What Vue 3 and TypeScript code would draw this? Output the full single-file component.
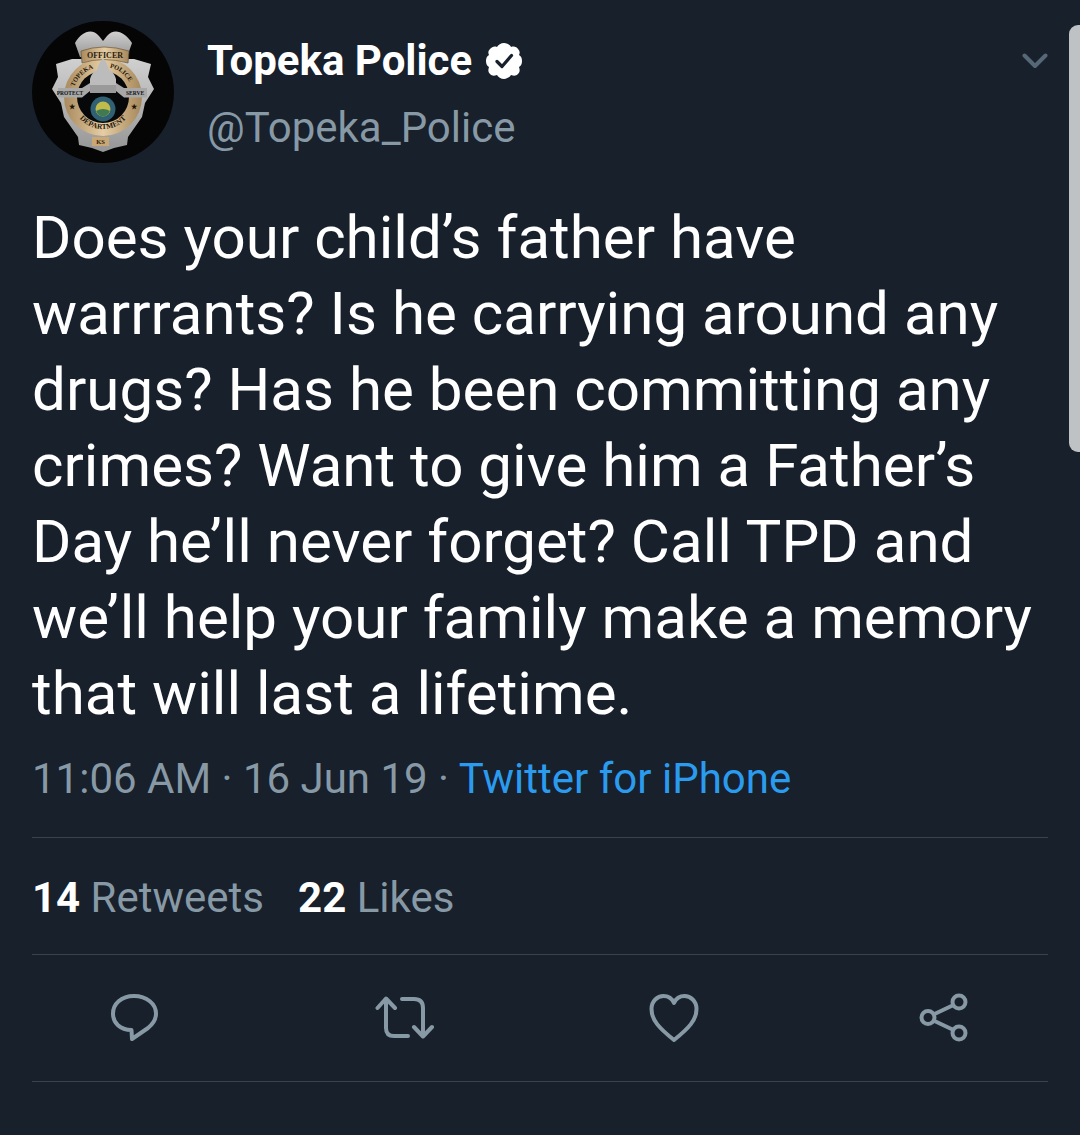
<script setup lang="ts">
const lines: string[] = [
  'Does your child’s father have',
  'warrrants? Is he carrying around any',
  'drugs? Has he been committing any',
  'crimes? Want to give him a Father’s',
  'Day he’ll never forget? Call TPD and',
  'we’ll help your family make a memory',
  'that will last a lifetime.',
]
</script>

<template>
  <main class="page">
    <div class="scrollbar"></div>
    <header class="head">
      <svg class="avatar" viewBox="0 0 142 142">
        <defs>
          <linearGradient id="gold" x1="0" y1="0" x2="1" y2="0">
            <stop offset="0" stop-color="#a88a5e" />
            <stop offset="0.5" stop-color="#e6cda3" />
            <stop offset="1" stop-color="#a5875a" />
          </linearGradient>
          <linearGradient id="silver" x1="0" y1="0" x2="0" y2="1">
            <stop offset="0" stop-color="#d0d0d0" />
            <stop offset="1" stop-color="#969696" />
          </linearGradient>
          <path id="arcL" d="M42 67 A30 30 0 0 1 67 46" />
          <path id="arcR" d="M75 46 A30 30 0 0 1 100 67" />
          <path id="arcB" d="M42 88 A31 31 0 0 0 100 88" />
        </defs>
        <circle cx="71" cy="71" r="71" fill="#050506" />
        <!-- eagle wings on top -->
        <path d="M43 22 C50 10 60 7 67 15 L71 20 L75 15 C82 7 92 10 100 22 L95 36 L48 36 Z" fill="url(#silver)" />
        <!-- shield body -->
        <path d="M24 43 L40 38 L102 38 L119 43 L116 56 L122 68 L113 82 L110 96 L96 116 L95 124 L82 127 L71 131 L60 127 L47 124 L46 116 L32 96 L29 82 L20 68 L26 56 Z" fill="url(#silver)" />
        <!-- ring -->
        <circle cx="71" cy="76" r="39" fill="url(#gold)" />
        <circle cx="71" cy="76" r="26" fill="#07080a" />
        <!-- officer banner -->
        <path d="M49 30 Q71 22 97 30 L96 42 Q71 35 50 42 Z" fill="url(#gold)" stroke="#6f5836" stroke-width="0.7" />
        <text class="b-t" font-size="8" x="73" y="37" text-anchor="middle" fill="#2a1b0c">OFFICER</text>
        <!-- ring texts -->
        <text class="b-t" font-size="6.5" fill="#1f1408">
          <textPath href="#arcL" startOffset="4%">TOPEKA</textPath>
        </text>
        <text class="b-t" font-size="6.5" fill="#1f1408">
          <textPath href="#arcR" startOffset="8%">POLICE</textPath>
        </text>
        <text class="b-t" font-size="7.5" fill="#1f1408">
          <textPath href="#arcB" startOffset="50%" text-anchor="middle">DEPARTMENT</textPath>
        </text>
        <!-- capitol dome -->
        <path d="M58 67 V58 Q60 51 65 49 Q67 41 71 37 Q75 41 77 49 Q82 51 84 58 V67 Z" fill="#bcbcbc" />
        <!-- side scrolls, running in to the dome -->
        <path d="M26 67 H50 L58 62 V70 L50 76.5 H26 Z" fill="#a8a8a8" />
        <path d="M115 67 H92 L84 62 V70 L92 76.5 H115 Z" fill="#a8a8a8" />
        <rect x="58" y="64" width="26" height="8" fill="#9a9a9a" />
        <text class="b-t" font-size="5.5" x="38" y="74" text-anchor="middle" fill="#111">PROTECT</text>
        <text class="b-t" font-size="5.5" x="103" y="74" text-anchor="middle" fill="#111">SERVE</text>
        <!-- seal -->
        <circle cx="71" cy="88" r="12.5" fill="#2f6073" />
        <circle cx="71" cy="88" r="7.5" fill="#c1bb4c" />
        <path d="M64 90 Q71 86 78 90 Q76 95 71 95.5 Q66 95 64 90 Z" fill="#3f7a52" />
        <!-- stars -->
        <text class="b-t" font-size="7" x="37" y="88" fill="#1f1408">★</text>
        <text class="b-t" font-size="7" x="99" y="88" fill="#1f1408">★</text>
        <!-- KS plaque -->
        <rect x="60" y="116" width="17" height="9" fill="#cba873" />
        <text class="b-t" font-size="6.5" x="68.5" y="123" text-anchor="middle" fill="#2a1b0c">KS</text>
      </svg>
      <div class="who">
        <div class="name-row">
          <span class="name">Topeka Police</span>
          <svg class="verified" viewBox="0 0 38 38">
            <path d="M19 1 C22 1 25 3 26 5 C29 4 32 5 33 7 C35 9 35 11 34 13 C36 14 37 16 37 19 C37 22 36 24 34 25 C35 28 35 30 33 32 C31 34 29 34 26 33 C25 35 22 37 19 37 C16 37 13 35 12 33 C9 34 7 34 5 32 C3 30 3 28 4 25 C2 24 1 22 1 19 C1 16 2 14 4 13 C3 11 3 9 5 7 C7 5 9 4 12 5 C13 3 16 1 19 1 Z" fill="#fff" />
            <path d="M12 19.5 L17 24.5 L26.5 13.5" fill="none" stroke="#17202b" stroke-width="3.2" stroke-linecap="round" stroke-linejoin="round" />
          </svg>
        </div>
        <div class="handle">@Topeka_Police</div>
      </div>
      <svg class="chev" viewBox="0 0 26 16">
        <path d="M2.5 2.5 L13 13 L23.5 2.5" fill="none" stroke="#566877" stroke-width="4" stroke-linecap="round" stroke-linejoin="round" />
      </svg>
    </header>

    <section class="body">
      <div v-for="l in lines" :key="l" class="line">{{ l }}</div>
    </section>

    <div class="meta">
      <span>11:06 AM · 16 Jun 19 · </span><span class="src">Twitter for iPhone</span>
    </div>

    <div class="stats">
      <span><b>14</b> Retweets</span>
      <span><b>22</b> Likes</span>
    </div>

    <nav class="actions">
      <svg class="act" viewBox="0 0 50 50">
        <path d="M24 3 C37 3 46 11 46 20.5 C46 27 43 31 38 35 L22 46 L21.5 37 C10 37 3 30 3 20.5 C3 11 11 3 24 3 Z" />
      </svg>
      <svg class="act act-rt" viewBox="0 0 60 50">
        <path d="M2.5 15 L11 5.5 L20 15 M11 6 V35 Q11 43 19 43 H33" />
        <path d="M27 6 H39 Q48 6 48 15 V43 M39 34 L48 43.5 L57 34" />
      </svg>
      <svg class="act act-heart" viewBox="0 0 50 50">
        <path d="M25 47 C10 35 2.5 27 2.5 16 C2.5 8 8.5 3 14.5 3 C19.5 3 23 5.5 25 10 C27 5.5 30.5 3 35.5 3 C41.5 3 47.5 8 47.5 16 C47.5 27 40 35 25 47 Z" />
      </svg>
      <svg class="act act-share" viewBox="0 0 50 50">
        <circle cx="9" cy="24.5" r="6.5" />
        <circle cx="40" cy="9" r="6.5" />
        <circle cx="40" cy="40" r="6.5" />
        <path d="M15.5 21 L33.5 12.5 M15.5 28 L33.5 36.5" />
      </svg>
    </nav>
  </main>
</template>

<style scoped>
.page {
  position: relative;
  box-sizing: border-box;
  width: 1080px;
  height: 1135px;
  overflow: hidden;
  padding: 21px 32px 0;
  background: #17202b;
  color: #fff;
  font-family: Roboto, "Liberation Sans", sans-serif;
}
.scrollbar {
  position: absolute;
  top: 25px;
  right: 0;
  width: 11px;
  height: 427px;
  border-radius: 9px 0 0 9px;
  background: #bfc2c5;
}
.head {
  display: flex;
  align-items: flex-start;
  height: 142px;
}
.avatar {
  flex: none;
  width: 142px;
  height: 142px;
}
.b-t {
  font-family: "Liberation Serif", serif;
  font-weight: 700;
}
.who {
  flex: 1;
  margin-left: 33px;
  padding-top: 16px;
}
.name-row {
  display: flex;
  align-items: center;
  height: 47px;
}
.name {
  font-size: 42px;
  font-weight: 700;
  line-height: 47px;
}
.verified {
  width: 38px;
  height: 38px;
  margin-left: 13px;
}
.handle {
  margin-top: 20px;
  font-size: 42px;
  line-height: 47px;
  color: #8899a6;
}
.chev {
  flex: none;
  width: 26px;
  height: 16px;
  margin-top: 32px;
}
.body {
  margin-top: 37px;
}
.line {
  height: 76px;
  font-size: 60.1px;
  line-height: 76px;
  white-space: nowrap;
}
.meta {
  margin-top: 23px;
  font-size: 42px;
  line-height: 48px;
  color: #8899a6;
  white-space: pre;
}
.src {
  color: #2b9bef;
}
.stats {
  display: flex;
  gap: 34px;
  align-items: center;
  box-sizing: border-box;
  height: 118px;
  margin-top: 34px;
  padding-top: 2px;
  border-top: 1px solid #38444d;
  border-bottom: 1px solid #38444d;
  font-size: 42px;
  color: #8899a6;
}
.stats b {
  color: #fff;
  font-weight: 700;
}
.actions {
  display: flex;
  align-items: center;
  height: 126px;
  padding-left: 78px;
  border-bottom: 1px solid #38444d;
}
.act {
  flex: none;
  height: 50px;
  width: auto;
  fill: none;
  stroke: #8899a6;
  stroke-width: 4;
  stroke-linecap: round;
  stroke-linejoin: round;
}
.act-rt {
  margin-left: 215px;
}
.act-heart {
  margin-left: 214px;
}
.act-share {
  margin-left: 220px;
}
</style>
